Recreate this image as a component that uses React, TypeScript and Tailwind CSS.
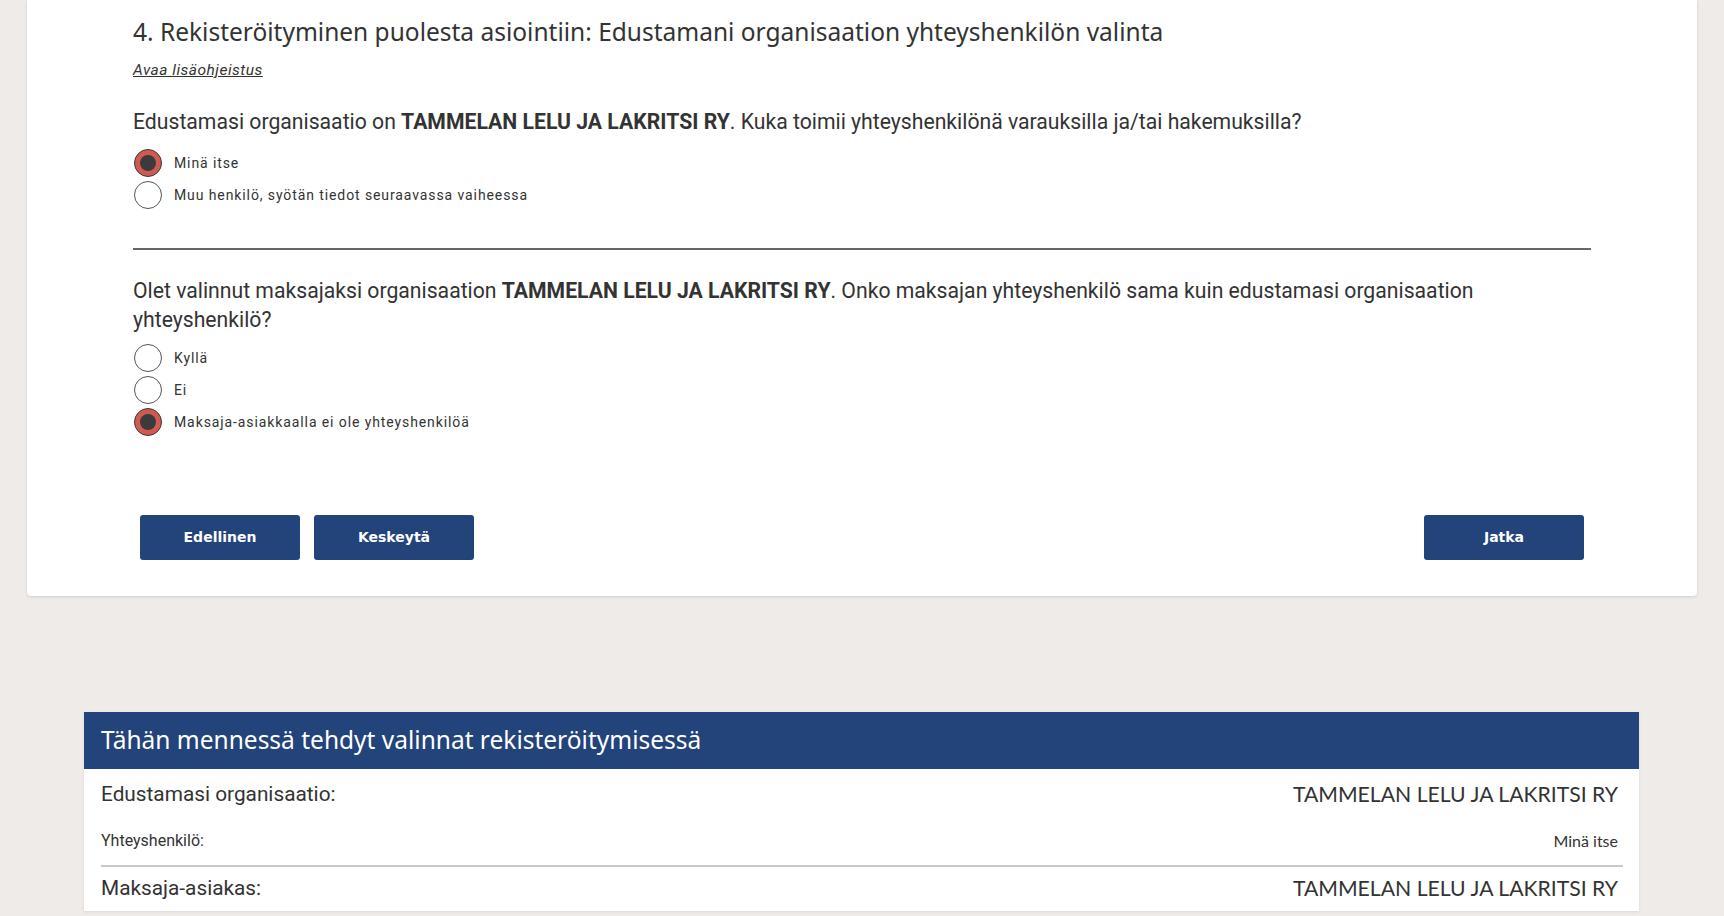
import React from "react";

const Radio = ({ checked, label }: { checked?: boolean; label: string }) => (
  <div className="flex h-[32px] items-center">
    {checked ? (
      <span className="ml-[1px] flex h-[28px] w-[28px] items-center justify-center rounded-full border-[1.5px] border-[#3a3a3a] bg-[#cf5a52]">
        <span className="h-[16px] w-[16px] rounded-full bg-[#3b3b3b]" />
      </span>
    ) : (
      <span className="ml-[1px] h-[28px] w-[28px] rounded-full border-[1.5px] border-[#555] bg-white" />
    )}
    <span className="ml-[12px] text-[14px] tracking-[0.9px] text-[#333] [font-family:Roboto,'Noto_Sans',sans-serif]">
      {label}
    </span>
  </div>
);

const Btn = ({ children }: { children: React.ReactNode }) => (
  <button className="mx-[7px] h-[45px] w-[160px] rounded-[3px] bg-[#23437b] text-[14px] font-bold text-white [font-family:'DejaVu_Sans',sans-serif]">
    {children}
  </button>
);

export default function App() {
  return (
    <div className="h-[916px] overflow-hidden bg-[#efebe8] text-[#333] [font-family:Roboto,'Noto_Sans',sans-serif]">
      <div className="ml-[27px] w-[1670px] rounded-b-[4px] bg-white px-[106px] pt-[16px] pb-[36px] shadow-[0_1px_3px_rgba(0,0,0,0.12)]">
        <h2 className="text-[24.5px] leading-[32px] text-[#333] [font-family:'Noto_Sans',sans-serif]">
          4. Rekisteröityminen puolesta asiointiin: Edustamani organisaation yhteyshenkilön valinta
        </h2>
        <a className="mt-[12px] block text-[15.5px] italic leading-[20px] tracking-[0.5px] text-[#333] underline">
          Avaa lisäohjeistus
        </a>
        <p className="mt-[28px] text-[21.2px] leading-[28px]">
          Edustamasi organisaatio on <b>TAMMELAN LELU JA LAKRITSI RY</b>. Kuka toimii yhteyshenkilönä varauksilla ja/tai hakemuksilla?
        </p>
        <div className="mt-[11px]">
          <Radio checked label="Minä itse" />
          <Radio label="Muu henkilö, syötän tiedot seuraavassa vaiheessa" />
        </div>
        <div className="mt-[37px] h-[2px] bg-[#666]" />
        <p className="mt-[26px] text-[21.2px] leading-[29px]">
          Olet valinnut maksajaksi organisaation <b>TAMMELAN LELU JA LAKRITSI RY</b>. Onko maksajan yhteyshenkilö sama kuin edustamasi organisaation yhteyshenkilö?
        </p>
        <div className="mt-[8px]">
          <Radio label="Kyllä" />
          <Radio label="Ei" />
          <Radio checked label="Maksaja-asiakkaalla ei ole yhteyshenkilöä" />
        </div>
        <div className="mt-[77px] flex justify-between">
          <div className="flex">
            <Btn>Edellinen</Btn>
            <Btn>Keskeytä</Btn>
          </div>
          <Btn>Jatka</Btn>
        </div>
      </div>

      <div className="ml-[84px] mt-[116px] w-[1555px] bg-white shadow-[0_1px_3px_rgba(0,0,0,0.08)]">
        <div className="flex h-[57px] items-center bg-[#23437b] px-[17px] text-[24.5px] text-white [font-family:'Noto_Sans',sans-serif]">
          Tähän mennessä tehdyt valinnat rekisteröitymisessä
        </div>
        <div className="pl-[17px] pr-[16px]">
          <div className="flex h-[52px] items-center justify-between pr-[5px]">
            <span className="text-[20.8px]">Edustamasi organisaatio:</span>
            <span className="text-[21.2px] [font-family:Lato,sans-serif]">TAMMELAN LELU JA LAKRITSI RY</span>
          </div>
          <div className="flex h-[44px] items-center justify-between pr-[5px] pb-[4px]">
            <span className="text-[16px]">Yhteyshenkilö:</span>
            <span className="text-[16px] [font-family:Lato,sans-serif]">Minä itse</span>
          </div>
          <div className="h-[1.5px] bg-[#c8c8c8]" />
          <div className="flex h-[44px] items-center justify-between pr-[5px]">
            <span className="text-[20.8px]">Maksaja-asiakas:</span>
            <span className="text-[21.2px] [font-family:Lato,sans-serif]">TAMMELAN LELU JA LAKRITSI RY</span>
          </div>
        </div>
      </div>
    </div>
  );
}
